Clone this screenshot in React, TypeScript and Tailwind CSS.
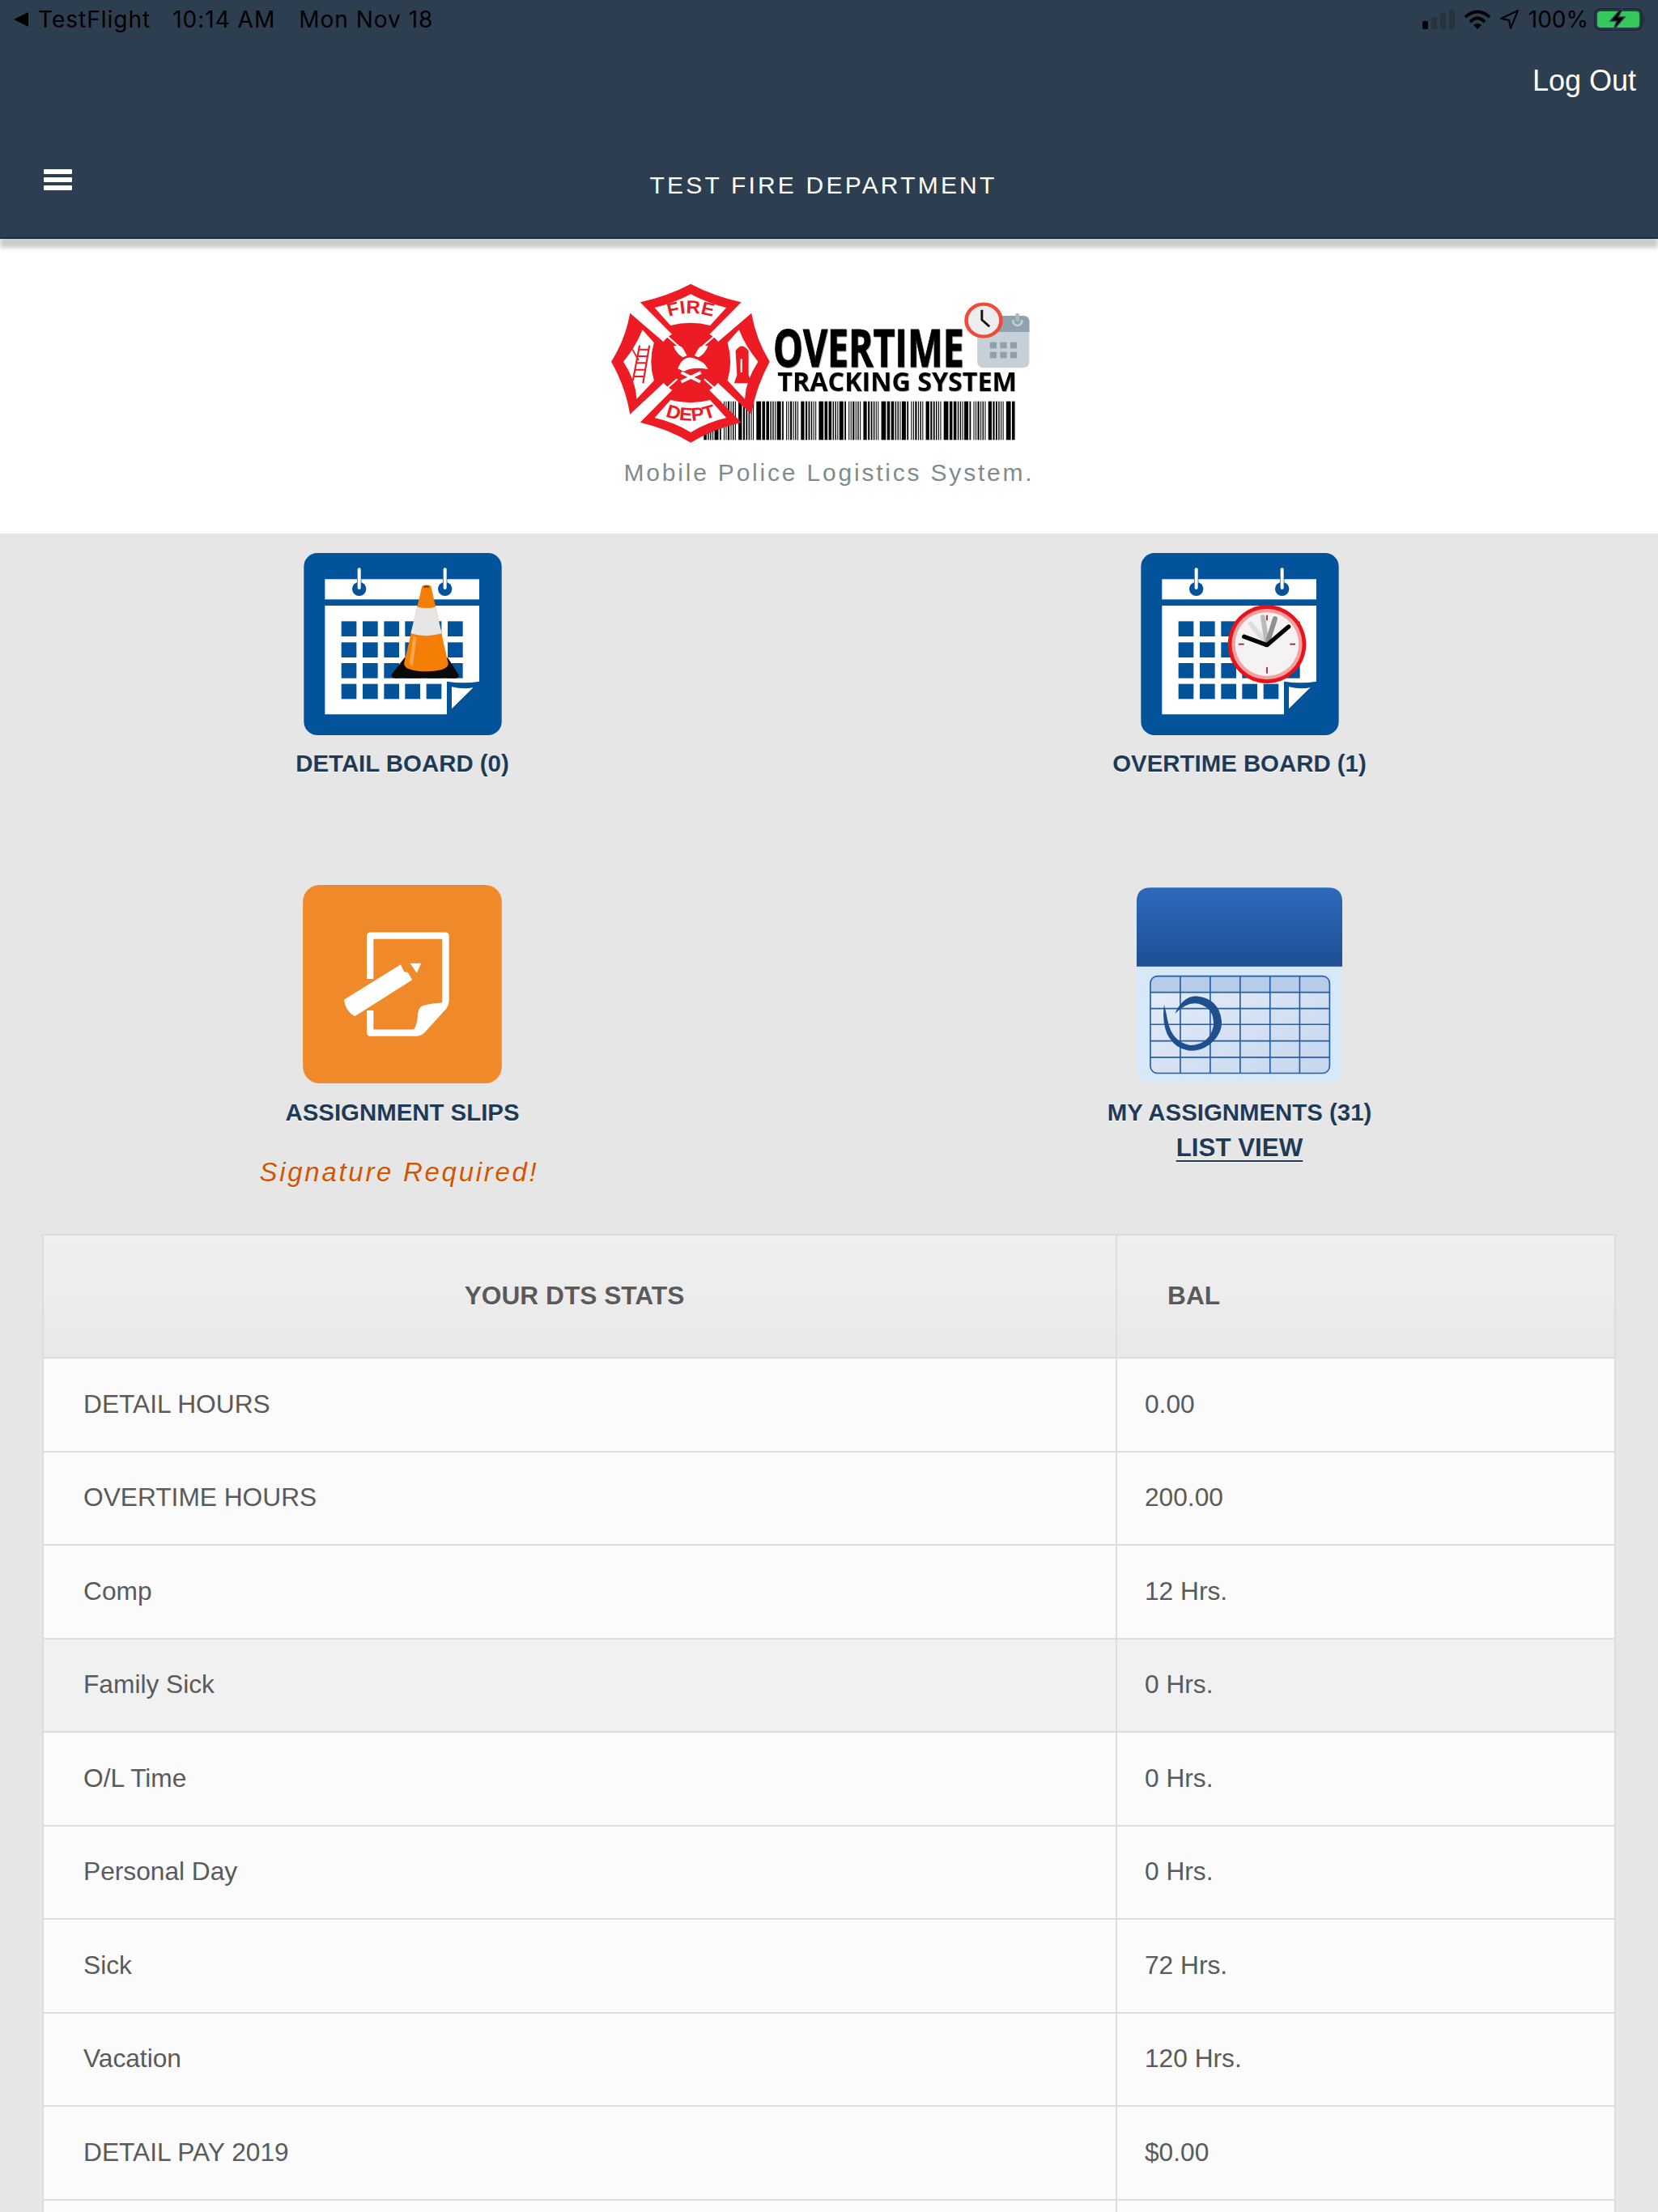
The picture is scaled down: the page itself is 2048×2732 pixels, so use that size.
import React from "react";

const rows: [string, string][] = [
  ["DETAIL HOURS", "0.00"],
  ["OVERTIME HOURS", "200.00"],
  ["Comp", "12 Hrs."],
  ["Family Sick", "0 Hrs."],
  ["O/L Time", "0 Hrs."],
  ["Personal Day", "0 Hrs."],
  ["Sick", "72 Hrs."],
  ["Vacation", "120 Hrs."],
  ["DETAIL PAY 2019", "$0.00"],
  ["", ""],
];

const BLUE = "#03539a";

function Board({ children }: { children?: React.ReactNode }) {
  const xs = [246, 325, 404, 482, 561, 640];
  const ys = [323, 401, 478, 555];
  return (
    <svg viewBox="107 70 733 675" className="w-[245px] h-[225px] block">
      <rect x="107" y="70" width="733" height="675" rx="50" fill={BLUE} />
      <rect x="185" y="167" width="572" height="75" fill="#fff" />
      {[312, 630].map((x) => (
        <g key={x}>
          <circle cx={x} cy="203" r="26" fill={BLUE} />
          <rect x={x - 8} y="120" width="16" height="60" fill={BLUE} />
          <rect x={x - 6} y="125" width="12" height="80" rx="6" fill="#fff" />
        </g>
      ))}
      <path d="M185 265 H757 V546 Q700 556 637 546 V668 H185 Z" fill="#fff" />
      {ys.map((y, r) =>
        xs.map((x, c) =>
          r === 3 && c === 5 ? null : <rect key={`${r}-${c}`} x={x} y={y} width="56" height="56" fill={BLUE} />
        )
      )}
      <path d="M655 566 Q700 576 735 568 L655 647 Z" fill="#fff" />
      {children}
    </svg>
  );
}

function Cone() {
  return (
    <g>
      <path d="M480 458 L432 520 Q430 533 445 534 H670 Q686 533 680 520 L640 458 Z" fill="#0a0a0a" />
      <path d="M545 192 Q562 185 578 192 L642 480 Q640 507 560 509 Q480 507 478 480 Z" fill="#f57f06" />
      <path d="M527 270 Q562 278 595 270 L618 368 Q562 385 503 368 Z" fill="#e6e6e6" />
      <path d="M550 192 Q562 188 572 192 L570 200 Q560 196 552 200 Z" fill="#8a4a00" />
      <path d="M512 380 L498 480 L510 490 L525 382 Z" fill="#ffb060" opacity="0.8" />
    </g>
  );
}

function OvertimeClock() {
  const cx = 574;
  const cy = 408;
  return (
    <g>
      <circle cx={cx} cy={cy} r="145" fill="#e8141c" />
      <circle cx={cx} cy={cy} r="131" fill="#f6a0a0" />
      <circle cx={cx} cy={cy} r="118" fill="#f4f2f2" />
      <path d={`M${cx} ${cy} L${cx - 60} ${cy - 75}`} stroke="#ddd" strokeWidth="18" strokeLinecap="round" />
      <path d={`M${cx} ${cy} L${cx - 15} ${cy - 100}`} stroke="#bbb" strokeWidth="18" strokeLinecap="round" />
      <path d={`M${cx} ${cy} L${cx + 30} ${cy - 95}`} stroke="#8f8f8f" strokeWidth="18" strokeLinecap="round" />
      <path d={`M${cx - 105} ${cy} H${cx - 85} M${cx + 85} ${cy} H${cx + 105} M${cx} ${cy - 108} V${cy - 88} M${cx} ${cy + 85} V${cy + 108}`} stroke="#9c1a1a" strokeWidth="5" />
      <path d={`M${cx - 85} ${cy - 28} L${cx} ${cy + 3} L${cx + 80} ${cy - 65}`} fill="none" stroke="#000" strokeWidth="16" strokeLinecap="round" strokeLinejoin="round" />
    </g>
  );
}

function SlipIcon() {
  return (
    <svg viewBox="223 40 737 735" className="w-[246px] h-[245px] block">
      <rect x="223" y="40" width="737" height="735" rx="62" fill="#f08929" />
      <path d="M472 388 V228 H752 V470 Q752 480 745 490 L665 578 Q655 588 640 588 H472 V505" fill="none" stroke="#fff" strokeWidth="25" strokeLinejoin="round" />
      <path d="M752 476 Q700 478 665 488 Q648 496 648 530 Q644 572 622 590 L655 590 L750 490 Z" fill="#fff" />
      <path d="M375 465 L585 335 L598 362 L612 364 L628 392 L415 527 Q382 510 375 465 Z" fill="#fff" />
      <path d="M620 330 H661 L645 366 Z" fill="#fff" />
    </svg>
  );
}

function MyCalIcon() {
  const vs = [352, 463, 574, 685, 795];
  const hs = [436, 496, 555, 616, 677];
  return (
    <svg viewBox="190 47 763 723" className="w-[254px] h-[241px] block">
      <defs>
        <linearGradient id="calTop" x1="0" y1="0" x2="0" y2="1">
          <stop offset="0" stopColor="#2c6abb" />
          <stop offset="1" stopColor="#1f4e92" />
        </linearGradient>
        <linearGradient id="calBody" x1="0" y1="0" x2="1" y2="1">
          <stop offset="0" stopColor="#e6eef9" />
          <stop offset="1" stopColor="#c6d6ee" />
        </linearGradient>
      </defs>
      <rect x="190" y="47" width="763" height="723" rx="52" fill="#d7e8f8" />
      <path d="M190 340 V99 Q190 47 242 47 H901 Q953 47 953 99 V340 Z" fill="url(#calTop)" />
      <rect x="241" y="376" width="665" height="360" rx="26" fill="url(#calBody)" />
      <path d="M241 436 V402 Q241 376 267 376 H880 Q906 376 906 402 V436 Z" fill="#b6cce8" />
      {vs.map((x) => (
        <line key={x} x1={x} y1="376" x2={x} y2="736" stroke="#1f5fae" strokeWidth="5" />
      ))}
      {hs.map((y) => (
        <line key={y} x1="241" y1={y} x2="906" y2={y} stroke="#1f5fae" strokeWidth="5" />
      ))}
      <rect x="241" y="376" width="665" height="360" rx="26" fill="none" stroke="#1f5fae" strokeWidth="5" />
      <path d="M292 482 Q278 590 340 635 Q400 672 460 630 Q510 590 505 540 Q495 458 410 450 Q360 452 332 515 Q375 470 420 478 Q480 495 475 560 Q460 630 390 632 Q320 620 305 540 Q300 510 292 482 Z" fill="#204f8e" />
    </svg>
  );
}

function Logo() {
  const pattern = [10, 4, 4, 3, 14, 5, 3, 3, 6, 3, 4, 3, 12, 6, 5, 4, 3, 3, 16, 10];
  const bars: React.ReactNode[] = [];
  let x = 390;
  let i = 0;
  while (x < 1470) {
    const w = pattern[i % pattern.length];
    const gap = pattern[(i + 7) % pattern.length] > 10 ? 9 : 4;
    bars.push(<rect key={i} x={x} y="497" width={Math.min(w, 1471 - x)} height="143" fill="#000" />);
    x += w + gap;
    i++;
  }
  const wedge = "#ed1c24";
  return (
    <svg viewBox="0 45 1568 615" preserveAspectRatio="none" className="w-[560px] h-[205px] block mr-[28px]">
      <defs>
        <path id="fireArc" d="M245 192 Q345 150 445 192" />
        <path id="deptArc" d="M245 548 Q345 590 445 548" />
      </defs>
      {bars}
      {/* top */}
      <path d="M170 130 Q270 105 345 62 Q420 105 520 130 L395 265 Q345 245 295 265 Z" fill={wedge} />
      <path d="M220 150 Q290 132 345 100 Q400 132 468 150 L412 216 Q345 196 275 216 Z" fill="#fff" />
      {/* bottom */}
      <path d="M170 575 Q270 600 345 650 Q420 600 520 575 L395 440 Q345 460 295 440 Z" fill={wedge} />
      <path d="M220 558 Q290 575 345 612 Q400 575 468 558 L412 492 Q345 512 275 492 Z" fill="#fff" />
      {/* left */}
      <path d="M135 170 Q120 265 70 350 Q120 445 135 545 L260 420 Q235 350 260 285 Z" fill={wedge} />
      <path d="M178 232 Q155 295 112 350 Q155 420 158 488 L218 420 Q198 350 218 280 Z" fill="#fff" />
      {/* right */}
      <path d="M555 170 Q570 265 618 350 Q570 445 555 545 L430 420 Q455 350 430 285 Z" fill={wedge} />
      <path d="M512 232 Q535 295 578 350 Q535 420 532 488 L472 420 Q492 350 472 280 Z" fill="#fff" />
      {/* centre */}
      <circle cx="345" cy="352" r="122" fill={wedge} />
      <path d="M238 232 L305 295 M452 232 L385 295 M238 472 L298 415 M452 472 L392 415" stroke="#fff" strokeWidth="6" />
      <path d="M285 292 Q312 284 322 308 L332 328 L318 334 Q296 322 285 292 Z" fill="#fff" />
      <path d="M405 292 Q378 284 368 308 L358 328 L372 334 Q394 322 405 292 Z" fill="#fff" />
      <path d="M300 376 Q318 328 352 336 Q392 348 405 378 Q350 368 322 386 Z" fill="#fff" />
      <path d="M312 425 L380 390 M378 425 L312 390" stroke="#fff" strokeWidth="11" />
      {/* ladder and hydrant */}
      <path d="M168 290 L145 420 M202 290 L180 430 M165 305 H200 M160 330 H196 M157 355 H192 M152 380 H188 M148 405 H184" stroke={wedge} strokeWidth="6" fill="none" />
      <path d="M135 290 L165 345" stroke={wedge} strokeWidth="5" />
      <path d="M500 310 Q522 275 545 310 V400 L555 430 H495 L505 400 Z" fill={wedge} />
      <path d="M520 340 V390" stroke="#fff" strokeWidth="6" />
      <text fontSize="68" fontWeight="700" fill={wedge} fontFamily="'Liberation Sans', sans-serif" textAnchor="middle">
        <textPath href="#fireArc" startOffset="50%">FIRE</textPath>
      </text>
      <text fontSize="68" fontWeight="700" fill={wedge} fontFamily="'Liberation Sans', sans-serif" textAnchor="middle">
        <textPath href="#deptArc" startOffset="50%">DEPT</textPath>
      </text>
      {/* wordmark */}
      <g className="drop-shadow-[2px_3px_2px_rgba(0,0,0,0.35)]">
        <g transform="translate(630 370) scale(0.66 1)">
          <text x="0" y="0" textLength="1000" lengthAdjust="spacingAndGlyphs" fontSize="196" fontWeight="700" fill="#000" stroke="#000" strokeWidth="3" fontFamily="'Open Sans', sans-serif">OVERTIME</text>
        </g>
        <g transform="translate(645 458) scale(0.946 1)">
          <text x="0" y="0" textLength="875" lengthAdjust="spacingAndGlyphs" fontSize="96" fontWeight="700" fill="#000" fontFamily="'Open Sans', sans-serif">TRACKING SYSTEM</text>
        </g>
      </g>
      {/* calendar + clock */}
      <rect x="1336" y="180" width="180" height="193" rx="22" fill="#c5d0d8" />
      <path d="M1336 240 V202 Q1336 180 1358 180 H1494 Q1516 180 1516 202 V240 Z" fill="#8fa3ae" />
      <path d="M1460 195 V205 Q1475 228 1490 205 V195" fill="none" stroke="#c5d0d8" strokeWidth="7" />
      <rect x="1468" y="170" width="14" height="32" rx="7" fill="#a9b8c1" />
      {[1380, 1415, 1450].map((gx) =>
        [278, 314].map((gy) => <rect key={`${gx}-${gy}`} x={gx} y={gy} width="23" height="23" fill="#8fa0ab" />)
      )}
      <circle cx="1358" cy="197" r="60" fill="#ededed" stroke="#f04a38" strokeWidth="13" />
      <path d="M1352 158 L1352 195 L1378 220" fill="none" stroke="#111" strokeWidth="8" strokeLinejoin="round" />
    </svg>
  );
}

function StatusBar() {
  return (
    <div className="h-[48px] flex items-center justify-between pl-[17px] pr-[15px] text-black text-[28px] [font-family:'Inter',sans-serif] tracking-[1px]">
      <div className="flex items-center">
        <svg viewBox="0 0 18 18" className="w-[18px] h-[18px] mr-[12px]">
          <path d="M18 0 V18 L0 9 Z" fill="#000" />
        </svg>
        <span className="mr-[27px]">TestFlight</span>
        <span className="mr-[29px]">10:14 AM</span>
        <span>Mon Nov 18</span>
      </div>
      <div className="flex items-center">
        <svg viewBox="0 0 40 24" className="w-[40px] h-[24px] mr-[11px]">
          <rect x="0" y="14" width="7" height="10" rx="2" fill="#000" />
          <rect x="11" y="9" width="7" height="15" rx="2" fill="#26333f" />
          <rect x="22" y="4" width="7" height="20" rx="2" fill="#26333f" />
          <rect x="33" y="0" width="7" height="24" rx="2" fill="#26333f" />
        </svg>
        <svg viewBox="0 0 34 24" className="w-[34px] h-[24px] mr-[11px]">
          <path d="M2 9 Q17 -4 32 9 M8 15 Q17 6 26 15" fill="none" stroke="#000" strokeWidth="4" />
          <path d="M12 19 Q17 15 22 19 L17 24 Z" fill="#000" />
        </svg>
        <svg viewBox="0 0 23 24" className="w-[23px] h-[24px] mr-[12px]">
          <path d="M22 1 L1 11 L11 13 L13 23 Z" fill="none" stroke="#000" strokeWidth="2" strokeLinejoin="round" />
        </svg>
        <span className="mr-[7px] tracking-[0px]">100%</span>
        <svg viewBox="0 0 64 28" className="w-[64px] h-[28px]">
          <rect x="1" y="1" width="58" height="26" rx="7" fill="none" stroke="#1f2a38" strokeWidth="2" />
          <rect x="4" y="4" width="52" height="20" rx="4" fill="#34c759" />
          <path d="M61 9 Q64 14 61 19 Z" fill="#1f2a38" />
          <path d="M33 1 L20 16 H28 L24 27 L38 11 H30 L35 1 Z" fill="#000" stroke="#2c3e50" strokeWidth="1.5" />
        </svg>
      </div>
    </div>
  );
}

const labelCls = "text-[29.4px] leading-[36px] font-bold text-[#1f3a56] [text-shadow:0_1px_0_#fff] whitespace-nowrap";

export default function App() {
  return (
    <div className="w-[2048px] h-[2732px] overflow-hidden bg-[#e6e6e6] [font-family:'Liberation_Sans',sans-serif]">
      <header className="relative z-10 h-[295px] bg-[#2c3e50] border-b-2 border-[#1b2c42] shadow-[0_11px_5px_0_#cccccc]">
        <StatusBar />
        <div className="flex justify-end pr-[27px] mt-[32px]">
          <span className="text-[36px] leading-[40px] text-white">Log Out</span>
        </div>
        <div className="flex items-start pl-[54px] mt-[89px]">
          <div className="w-[35px] flex flex-col gap-[4px]">
            <span className="h-[6px] rounded-[1px] bg-white" />
            <span className="h-[6px] rounded-[1px] bg-white" />
            <span className="h-[6px] rounded-[1px] bg-white" />
          </div>
          <div className="flex-1 pr-[103px] text-center text-white text-[30px] leading-[36px] tracking-[3.2px] mt-[2px]">
            TEST FIRE DEPARTMENT
          </div>
        </div>
      </header>

      <section className="h-[364px] bg-white flex flex-col items-center pt-[50px]">
        <Logo />
        <p className="text-[30px] leading-[36px] tracking-[2.8px] text-[#7f8c8d] mt-[16px]">Mobile Police Logistics System.</p>
      </section>

      <section className="grid grid-cols-2 grid-rows-[410px_431px] gap-x-[40px] pr-[20px] pt-[24px]">
        <div className="flex flex-col items-center">
          <Board>
            <Cone />
          </Board>
          <div className={`${labelCls} mt-[17px]`}>DETAIL BOARD (0)</div>
        </div>
        <div className="flex flex-col items-center">
          <Board>
            <OvertimeClock />
          </Board>
          <div className={`${labelCls} mt-[17px]`}>OVERTIME BOARD (1)</div>
        </div>
        <div className="flex flex-col items-center">
          <SlipIcon />
          <div className={`${labelCls} mt-[18px]`}>ASSIGNMENT SLIPS</div>
          <div className="mt-[36px] mr-[8px] text-[33px] leading-[40px] italic tracking-[2.7px] text-[#d35400] [text-shadow:0_1px_0_#fff]">Signature Required!</div>
        </div>
        <div className="flex flex-col items-center">
          <div className="mt-[3px]">
            <MyCalIcon />
          </div>
          <div className={`${labelCls} mt-[19px]`}>MY ASSIGNMENTS (31)</div>
          <div className={`${labelCls} !text-[31.3px] mt-[8px] underline decoration-2 underline-offset-[5px]`}>LIST VIEW</div>
        </div>
      </section>

      <table className="table-fixed w-[1944px] mx-[52px] border-collapse text-[31.7px] text-[#5a5a5a]">
        <colgroup>
          <col className="w-[1326px]" />
          <col />
        </colgroup>
        <thead>
          <tr className="h-[152px]">
            <th className="border-2 border-[#dddddd] bg-linear-to-b from-[#efefef] to-[#e9e9e9] text-center font-bold pr-[13px] [text-shadow:0_1px_0_#fff]">YOUR DTS STATS</th>
            <th className="border-2 border-[#dddddd] bg-linear-to-b from-[#efefef] to-[#e9e9e9] text-left font-bold pl-[62px] [text-shadow:0_1px_0_#fff]">BAL</th>
          </tr>
        </thead>
        <tbody>
          {rows.map(([name, value], i) => (
            <tr key={i} className={`h-[115.5px] ${i === 3 ? "bg-[#f1f1f1]" : "bg-[#fbfbfb]"}`}>
              <td className="border-2 border-[#dddddd] pl-[49px]">{name}</td>
              <td className="border-2 border-[#dddddd] pl-[34px]">{value}</td>
            </tr>
          ))}
        </tbody>
      </table>
    </div>
  );
}
